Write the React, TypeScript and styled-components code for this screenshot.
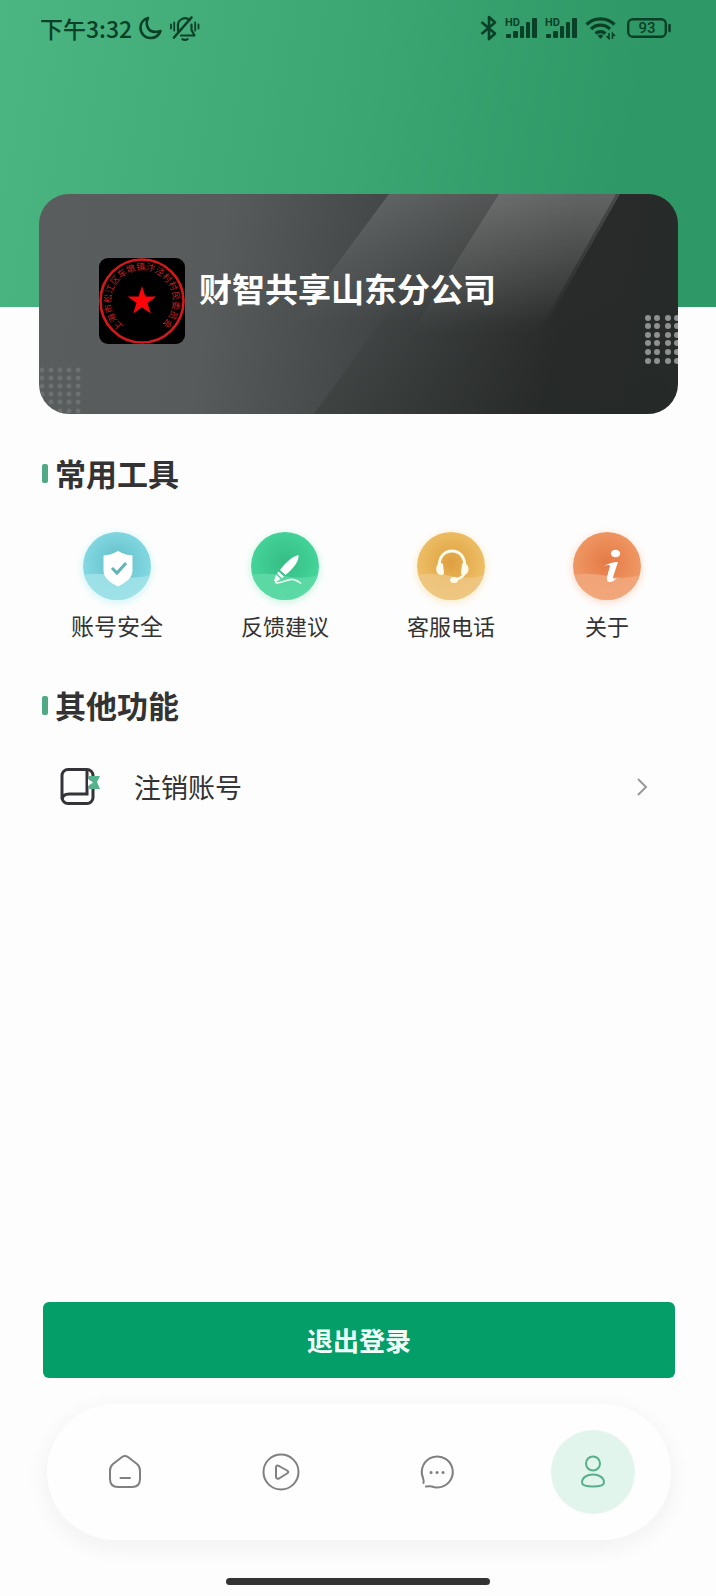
import React from 'react';
import styled, { createGlobalStyle } from 'styled-components';

const GlobalStyle = createGlobalStyle`
  * { box-sizing: border-box; }
  body {
    margin: 0;
    background: #fdfdfd;
    color: #333;
    font-family: "Noto Sans CJK SC", "Noto Sans", sans-serif;
  }
  button { font-family: inherit; border: 0; padding: 0; background: none; color: inherit; cursor: pointer; }
  a { color: inherit; text-decoration: none; }
  h1, h2 { margin: 0; }
  svg { display: block; flex: none; }
`;

const Screen = styled.div`
  min-height: 100vh;
  display: flex;
  flex-direction: column;
  background: linear-gradient(100deg, #4bb681 0%, #3ba672 50%, #2e9866 85%) top / 100% 307px no-repeat #fdfdfd;
`;

const StatusBar = styled.header`
  display: flex;
  justify-content: space-between;
  align-items: center;
  height: 56px;
  padding: 0 45px 0 40px;
  color: #0b4028;
`;

const StatusGroup = styled.div<{ $gap: number }>`
  display: flex;
  align-items: center;
  gap: ${(p) => p.$gap}px;
`;

const Clock = styled.time`
  font-size: 23px;
  line-height: 32px;
  font-weight: 500;
`;

const Card = styled.section`
  position: relative;
  overflow: hidden;
  display: flex;
  gap: 14px;
  height: 220px;
  margin: 138px 38px 0 39px;
  padding: 64px 60px;
  border-radius: 30px;
  background: linear-gradient(100deg, #5a5d5e 0%, #575b5b 28%, #434747 52%, #282b2a 80%, #262a29 100%);
`;

const CardArt = styled.svg`
  position: absolute;
  inset: 0;
  width: 100%;
  height: 100%;
`;

const Avatar = styled.div`
  position: relative;
  width: 86px;
  height: 86px;
  border-radius: 9px;
  overflow: hidden;
  background: #000;
`;

const Company = styled.h1`
  position: relative;
  font-size: 33px;
  line-height: 60px;
  font-weight: 700;
  color: #fff;
`;

const SectionTitle = styled.h2<{ $top: number }>`
  display: flex;
  align-items: center;
  gap: 7px;
  margin: ${(p) => p.$top}px 42px 0;
  font-size: 31px;
  line-height: 40px;
  font-weight: 700;

  &::before {
    content: "";
    width: 6px;
    height: 19px;
    border-radius: 2px;
    background: #4fa985;
  }
`;

const Tools = styled.nav`
  display: flex;
  justify-content: space-between;
  margin: 39px 75px 0 71px;
`;

const Tool = styled.button<{ $size: number }>`
  display: flex;
  flex-direction: column;
  align-items: center;
  gap: 9px;
  font-size: ${(p) => p.$size}px;
  line-height: 32px;
`;

const Disc = styled.span<{ $from: string; $to: string; $wave: string }>`
  display: block;
  width: 68px;
  height: 68px;
  border-radius: 50%;
  overflow: hidden;
  background: radial-gradient(circle at 50% 45%, ${(p) => p.$from}, ${(p) => p.$to} 75%);
  box-shadow: 0 2px 8px ${(p) => p.$wave};
`;

const Row = styled.button`
  display: flex;
  align-items: center;
  margin: 40px 68px 0 60px;
  height: 44px;
  font-size: 27px;
  text-align: left;
`;

const RowLabel = styled.span`
  flex: 1;
  padding-left: 34px;
  line-height: 44px;
`;

const Bottom = styled.footer`
  margin-top: auto;
  padding-bottom: 11px;
  display: flex;
  flex-direction: column;
`;

const Logout = styled.button`
  height: 76px;
  margin: 0 41px 0 43px;
  border-radius: 6px;
  background: #049e68;
  color: #f2fff9;
  font-size: 26px;
  font-weight: 700;
  line-height: 76px;
`;

const TabBar = styled.nav`
  display: flex;
  align-items: center;
  height: 136px;
  margin: 26px 45px 0 47px;
  border-radius: 68px;
  background: #fefefe;
  box-shadow: 0 6px 24px rgba(60, 30, 40, 0.06);
`;

const TabSlot = styled.div`
  flex: 1;
  display: flex;
  justify-content: center;
`;

const Tab = styled.a<{ $active?: boolean }>`
  display: grid;
  place-items: center;
  width: 84px;
  height: 84px;
  border-radius: 50%;
  color: ${(p) => (p.$active ? '#55b08b' : '#808080')};
  background: ${(p) => (p.$active ? '#e2f5ec' : 'transparent')};
`;

const HomeIndicator = styled.div`
  align-self: center;
  width: 37%;
  height: 7px;
  margin-top: 38px;
  border-radius: 4px;
  background: #333;
`;

const Moon = () => (
  <svg width="24" height="24" viewBox="0 0 24 24" fill="none" stroke="currentColor" strokeWidth="2.6" strokeLinejoin="round">
    <path d="M9 2C4.500 3.200 1.500 7.200 1.500 12c0 5.600 4.400 10 10 10 4.500 0 8.500-2.700 10-7-6.500 2-10.500.5-12.500-3C7.200 8.600 7.500 5 9 2Z" />
  </svg>
);

const MutedBell = () => (
  <svg width="30" height="26" viewBox="0 0 30 26" fill="none" stroke="currentColor" strokeWidth="2.200" strokeLinecap="round" strokeLinejoin="round">
    <path d="M8 16v-5a7 7 0 0 1 11.500-6M21.500 9.500v5.500l3 5.500H11" />
    <path d="M4 22.500 21.500 2.500" strokeWidth="2.600" />
    <path d="M12.500 24.200q2.500 1.300 5 0" />
    <path d="M1 9.500v4M4.200 7.500v8M25.200 7.500v8M28.500 9.500v4" strokeWidth="1.800" />
  </svg>
);

const Bluetooth = () => (
  <svg width="17" height="26" viewBox="0 0 17 26" fill="none" stroke="currentColor" strokeWidth="2.600" strokeLinejoin="round">
    <path d="M1.500 7 15 18.500 9 24V2l6 5.500L1.500 19" />
  </svg>
);

const Signal = () => (
  <svg width="32" height="28" viewBox="0 0 32 28" fill="currentColor">
    <text x="0" y="12" fontFamily="Roboto, sans-serif" fontSize="11" fontWeight="700">HD</text>
    <rect x="1" y="20" width="5" height="4" rx="1" />
    <rect x="8" y="17" width="5" height="7" rx="1" />
    <rect x="15" y="12" width="4" height="12" rx="1" />
    <rect x="21" y="8" width="4" height="16" rx="1" />
    <rect x="27" y="4" width="5" height="20" rx="1" />
  </svg>
);

const Wifi = () => (
  <svg width="34" height="24" viewBox="0 0 34 24" fill="none" stroke="currentColor" strokeWidth="3.200">
    <path d="M1.500 8.500a20 20 0 0 1 28 0M6 13a13.500 13.500 0 0 1 19 0M10.500 17.500a7.500 7.500 0 0 1 10 0" />
    <path d="m12.500 19.500 3 3.500 3-3.500q-3-2-6 0Z" fill="currentColor" stroke="none" />
    <path d="M24 17v5.500l-2.500-2.500M27.500 23v-5.500l2.500 2.500" strokeWidth="1.600" />
  </svg>
);

const Battery = () => (
  <svg width="44" height="20" viewBox="0 0 44 20" fill="none" stroke="currentColor">
    <rect x="1.200" y="1.200" width="37.600" height="17.600" rx="4.500" strokeWidth="2.400" />
    <path d="M42.500 7v6" strokeWidth="2.600" strokeLinecap="round" />
    <text x="20" y="15" textAnchor="middle" fontFamily="Roboto, sans-serif" fontSize="15" fontWeight="500" fill="currentColor" stroke="none">93</text>
  </svg>
);

const CardDecoration = () => (
  <CardArt viewBox="0 0 639 220" preserveAspectRatio="none" aria-hidden="true">
    <defs>
      <linearGradient id="beamWide" gradientUnits="userSpaceOnUse" x1="0" y1="0" x2="0" y2="130">
        <stop offset="0" stopColor="#fff" stopOpacity="0.150" />
        <stop offset="0.500" stopColor="#fff" stopOpacity="0.070" />
        <stop offset="1" stopColor="#fff" stopOpacity="0" />
      </linearGradient>
      <linearGradient id="beamBright" gradientUnits="userSpaceOnUse" x1="0" y1="0" x2="0" y2="140">
        <stop offset="0" stopColor="#fff" stopOpacity="0.140" />
        <stop offset="0.500" stopColor="#fff" stopOpacity="0.080" />
        <stop offset="1" stopColor="#fff" stopOpacity="0" />
      </linearGradient>
      <linearGradient id="lowerShade" x1="0" y1="1" x2="0" y2="0">
        <stop offset="0" stopColor="#222622" stopOpacity="0.250" />
        <stop offset="1" stopColor="#222622" stopOpacity="0" />
      </linearGradient>
    </defs>
    <path d="M275 220 365 95H590L639 220Z" fill="url(#lowerShade)" />
    <path d="M350 0H581L502 140H246Z" fill="url(#beamWide)" />
    <path d="M460 0H577L498 140H372Z" fill="url(#beamBright)" />
    <g fill="#8e9190">
      {[124, 132, 141, 149, 158, 167].map((y) =>
        [609, 618, 629, 638].map((x) => <circle key={`${x}-${y}`} cx={x} cy={y} r="3" />),
      )}
    </g>
    <g fill="#6c706f">
      {[176, 184, 192, 200, 208, 217].map((y) =>
        [3, 12, 21, 30, 39].map((x) => <circle key={`${x}-${y}`} cx={x} cy={y} r="2.500" />),
      )}
    </g>
  </CardArt>
);

const Seal = () => (
  <svg width="86" height="86" viewBox="0 0 86 86" aria-hidden="true">
    <defs>
      <path id="sealArc" d="M25 68.200A31 31 0 1 1 61 68.200" />
    </defs>
    <circle cx="43" cy="43" r="41.500" fill="none" stroke="#d2191c" strokeWidth="2.600" />
    <path d="M43 28l3.400 10.500h10.900l-8.800 6.500 3.300 10.500L43 49.200l-8.800 6.300 3.300-10.500-8.800-6.500h10.900z" fill="#fb0509" />
    <text fontSize="9" fill="#c22022" fontFamily='"Noto Sans CJK SC", sans-serif'>
      <textPath href="#sealArc">上海市松江区车墩镇汴泾村村民委员会</textPath>
    </text>
  </svg>
);

const Wave = ({ color }: { color: string }) => (
  <path d="M0 43q17-3 34 1t34-1v25H0z" fill={color} fillOpacity="0.800" />
);

const ShieldIcon = () => (
  <svg width="68" height="68" viewBox="0 0 68 68">
    <Wave color="#a4e4e8" />
    <path d="M35 19q7 4 14.500 4.500v15c0 8-7 12-14.500 16-7.500-4-14.500-8-14.500-16v-15Q28 23 35 19Z" fill="#fff" />
    <path d="m29 36 5 5 9-10" fill="none" stroke="#5fb4b5" strokeWidth="3" />
  </svg>
);

const PenIcon = () => (
  <svg width="68" height="68" viewBox="0 0 68 68">
    <Wave color="#62dba8" />
    <g fill="#fff">
      <path d="M47.500 23c1 5-5 14-13 20l-5.500-5c5-7 13-14 18.500-15Z" />
      <path d="m27.500 39.500 5.500 5-2 1.800-5-5zM25 42.500l4.500 4.500-4.500 3-2-1z" />
    </g>
    <path d="M24 50.500c7 2 12-4 18-3q5 1 8 4" fill="none" stroke="#e8fff5" strokeWidth="1.600" />
  </svg>
);

const HeadsetIcon = () => (
  <svg width="68" height="68" viewBox="0 0 68 68">
    <Wave color="#efc886" />
    <g fill="none" stroke="#fffbea" strokeLinecap="round">
      <path d="M22 35c0-10 5-16 13-16s13 6 13 16" strokeWidth="2.800" />
      <path d="M48 38c0 6-4 8-10 10" strokeWidth="2.400" />
    </g>
    <path d="M24 31c-6 0-7 12 1 12q2 0 2-2l-1-9ZM46 31c7 0 8 12 0 12q-2 0-2-2l1-9Z" fill="#fffbea" />
    <ellipse cx="37" cy="48" rx="4" ry="3" fill="#fffbea" />
  </svg>
);

const InfoIcon = () => (
  <svg width="68" height="68" viewBox="0 0 68 68">
    <Wave color="#f1aa80" />
    <g fill="#fff">
      <ellipse cx="42.500" cy="21.500" rx="4.600" ry="3.800" />
      <path d="M31 34q7-4 14-4l-5 15q-1 3 4 1-4 4-7 4-4 0-3-5l3-11q0-2-6 0Z" />
    </g>
  </svg>
);

const BookIcon = () => (
  <svg width="40" height="38" viewBox="0 0 40 38" fill="none" stroke="#343438" strokeWidth="3">
    <rect x="2" y="1.500" width="31" height="34" rx="6" />
    <path d="M27 2v24H9q-6 0-7 5" />
    <path d="M29 8h11l-3 6 3 7H29z" fill="#53b48c" stroke="none" />
    <path d="M28 11l5 3.500-5 3.500" fill="#fff" stroke="none" />
  </svg>
);

const Chevron = () => (
  <svg width="12" height="20" viewBox="0 0 12 20" fill="none" stroke="#999" strokeWidth="2">
    <path d="m2 2 8 8-8 8" />
  </svg>
);

const tabStroke = { fill: 'none', stroke: 'currentColor', strokeWidth: 2, strokeLinecap: 'round', strokeLinejoin: 'round' } as const;

const HomeIcon = () => (
  <svg width="38" height="38" viewBox="0 0 38 38" {...tabStroke}>
    <path d="M16 4q3-2 6 0l9 7q3 2.500 3 6.500V26q0 8-8 8H12q-8 0-8-8v-8.500q0-4 3-6.500zM14.500 25h9.500" />
  </svg>
);

const PlayIcon = () => (
  <svg width="38" height="38" viewBox="0 0 38 38" {...tabStroke}>
    <circle cx="19" cy="19" r="17.500" />
    <path d="M14 14.500q0-3 3-1.500l8 4.500q2.500 1.500 0 3l-8 5q-3 1-3-2z" />
  </svg>
);

const ChatIcon = () => (
  <svg width="38" height="38" viewBox="0 0 38 38" {...tabStroke}>
    <path d="M5.500 30q.5-2-.5-5A15.500 15.500 0 1 1 19 34.500q-3 0-5-1-2.500-.5-6 0" />
    <path d="M13 19.500h.1M19 19.500h.1M25 19.500h.1" strokeWidth="3" />
  </svg>
);

const PersonIcon = () => (
  <svg width="38" height="38" viewBox="0 0 38 38" {...tabStroke}>
    <circle cx="19" cy="10.500" r="7" />
    <path d="M8 29.500c0-5 5-8 11-8s11 3 11 8q0 4-11 4t-11-4Z" />
  </svg>
);

const tools = [
  { label: '账号安全', size: 23, from: '#63bdc6', to: '#86dce6', wave: '#c9f3f5', icon: <ShieldIcon /> },
  { label: '反馈建议', size: 22, from: '#34bd84', to: '#46d69c', wave: '#c5f3df', icon: <PenIcon /> },
  { label: '客服电话', size: 22, from: '#dfa040', to: '#efc26a', wave: '#fbe8c0', icon: <HeadsetIcon /> },
  { label: '关于', size: 22, from: '#e57a45', to: '#f09b68', wave: '#fcd7c4', icon: <InfoIcon /> },
];

const tabs = [
  { label: '首页', icon: <HomeIcon /> },
  { label: '播放', icon: <PlayIcon /> },
  { label: '消息', icon: <ChatIcon /> },
  { label: '我的', icon: <PersonIcon />, active: true },
];

export default function App() {
  return (
    <Screen>
      <GlobalStyle />
      <StatusBar>
        <StatusGroup $gap={7}>
          <Clock>下午3:32</Clock>
          <Moon />
          <MutedBell />
        </StatusGroup>
        <StatusGroup $gap={8}>
          <Bluetooth />
          <Signal />
          <Signal />
          <Wifi />
          <Battery />
        </StatusGroup>
      </StatusBar>

      <Card>
        <CardDecoration />
        <Avatar>
          <Seal />
        </Avatar>
        <Company>财智共享山东分公司</Company>
      </Card>

      <SectionTitle $top={39}>常用工具</SectionTitle>
      <Tools>
        {tools.map((t) => (
          <Tool key={t.label} $size={t.size}>
            <Disc $from={t.from} $to={t.to} $wave={t.wave}>
              {t.icon}
            </Disc>
            {t.label}
          </Tool>
        ))}
      </Tools>

      <SectionTitle $top={44}>其他功能</SectionTitle>
      <Row>
        <BookIcon />
        <RowLabel>注销账号</RowLabel>
        <Chevron />
      </Row>

      <Bottom>
        <Logout>退出登录</Logout>
        <TabBar>
          {tabs.map((t) => (
            <TabSlot key={t.label}>
              <Tab href="#" aria-label={t.label} $active={t.active}>
                {t.icon}
              </Tab>
            </TabSlot>
          ))}
        </TabBar>
        <HomeIndicator />
      </Bottom>
    </Screen>
  );
}
